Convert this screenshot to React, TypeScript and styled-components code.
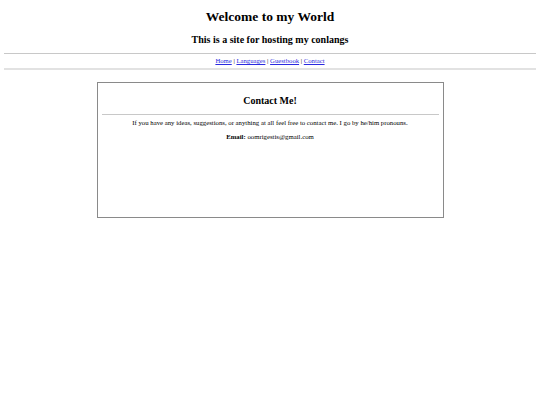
import React from "react";
import styled, { createGlobalStyle } from "styled-components";

const Global = createGlobalStyle`
  html, body { margin: 0; padding: 0; background: #fff; }
  body {
    margin: 4px;
    font-family: "Liberation Serif", "Times New Roman", serif;
    font-size: 6.75px;
    color: #000;
  }
`;

const Header = styled.header`
  text-align: center;
`;

const Title = styled.h1`
  font-size: 13.5px;
  font-weight: bold;
  margin: 5px 0 0;
  line-height: 1.15;
`;

const Subtitle = styled.h2`
  font-size: 10px;
  font-weight: bold;
  margin: 9px 0 0;
  line-height: 1.15;
`;

const Rule = styled.hr<{ $thick?: boolean }>`
  border: none;
  margin: ${(p) => (p.$thick ? "3px 0 0" : "8px 0 0")};
  height: ${(p) => (p.$thick ? "2px" : "1px")};
  background: ${(p) => (p.$thick ? "#e2e2e2" : "#c8c8c8")};
`;

const Nav = styled.nav`
  text-align: center;
  margin-top: 3px;
  font-size: 6.7px;
  line-height: 1.15;
  a { color: #2a2ae0; }
`;

const Box = styled.section`
  width: 337px;
  height: 134px;
  margin: 12px auto 0;
  border: 1px solid #8a8a8a;
  box-sizing: content-box;
  padding: 0 4px;
  text-align: center;
`;

const BoxTitle = styled.h2`
  font-size: 10px;
  font-weight: bold;
  margin: 12px 0 0;
  line-height: 1.15;
`;

const BoxRule = styled.hr`
  border: none;
  height: 1px;
  background: #c8c8c8;
  margin: 8px 0 0;
`;

const Para = styled.p<{ $gap?: number }>`
  margin: ${(p) => p.$gap ?? 4}px 0 0;
  font-size: 6.75px;
  line-height: 1.15;
`;

export default function App() {
  return (
    <>
      <Global />
      <Header>
        <Title>Welcome to my World</Title>
        <Subtitle>This is a site for hosting my conlangs</Subtitle>
      </Header>
      <Rule />
      <Nav>
        <a href="#">Home</a> | <a href="#">Languages</a> | <a href="#">Guestbook</a> | <a href="#">Contact</a>
      </Nav>
      <Rule $thick />
      <Box>
        <BoxTitle>Contact Me!</BoxTitle>
        <BoxRule />
        <Para>If you have any ideas, suggestions, or anything at all feel free to contact me. I go by he/him pronouns.</Para>
        <Para $gap={6}>
          <b>Email:</b> oomrigestis@gmail.com
        </Para>
      </Box>
    </>
  );
}
